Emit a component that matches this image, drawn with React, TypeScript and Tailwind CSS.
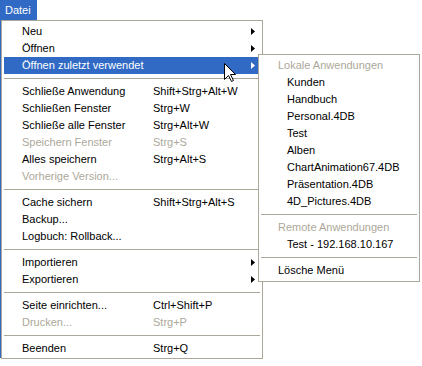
import React from 'react';

type Item =
  | { kind: 'sep' }
  | { kind: 'item'; label: string; shortcut?: string; disabled?: boolean; sub?: boolean; active?: boolean };

const mainItems: Item[] = [
  { kind: 'item', label: 'Neu', sub: true },
  { kind: 'item', label: 'Öffnen', sub: true },
  { kind: 'item', label: 'Öffnen zuletzt verwendet', sub: true, active: true },
  { kind: 'sep' },
  { kind: 'item', label: 'Schließe Anwendung', shortcut: 'Shift+Strg+Alt+W' },
  { kind: 'item', label: 'Schließen Fenster', shortcut: 'Strg+W' },
  { kind: 'item', label: 'Schließe alle Fenster', shortcut: 'Strg+Alt+W' },
  { kind: 'item', label: 'Speichern Fenster', shortcut: 'Strg+S', disabled: true },
  { kind: 'item', label: 'Alles speichern', shortcut: 'Strg+Alt+S' },
  { kind: 'item', label: 'Vorherige Version...', disabled: true },
  { kind: 'sep' },
  { kind: 'item', label: 'Cache sichern', shortcut: 'Shift+Strg+Alt+S' },
  { kind: 'item', label: 'Backup...' },
  { kind: 'item', label: 'Logbuch: Rollback...' },
  { kind: 'sep' },
  { kind: 'item', label: 'Importieren', sub: true },
  { kind: 'item', label: 'Exportieren', sub: true },
  { kind: 'sep' },
  { kind: 'item', label: 'Seite einrichten...', shortcut: 'Ctrl+Shift+P' },
  { kind: 'item', label: 'Drucken...', shortcut: 'Strg+P', disabled: true },
  { kind: 'sep' },
  { kind: 'item', label: 'Beenden', shortcut: 'Strg+Q' },
];

const recent = ['Kunden', 'Handbuch', 'Personal.4DB', 'Test', 'Alben', 'ChartAnimation67.4DB', 'Präsentation.4DB', '4D_Pictures.4DB'];

function Arrow({ white }: { white?: boolean }) {
  return (
    <svg width="4" height="7" viewBox="0 0 4 7" className="shrink-0">
      <polygon points="0,0 4,3.5 0,7" fill={white ? '#ffffff' : '#000000'} />
    </svg>
  );
}

function Separator() {
  return (
    <div className="h-[9px] flex items-center">
      <div className="h-px w-full bg-[#ACA899]" />
    </div>
  );
}

function Cursor() {
  return (
    <svg width="12" height="20" viewBox="0 0 12 20" className="absolute left-[224px] top-[63px]">
      <polygon
        points="0.5,0.5 0.5,16.5 4.5,12.5 7.5,18.5 9.5,17.5 6.5,11.5 11.5,11.5"
        fill="#ffffff"
        stroke="#000000"
        strokeWidth="1"
      />
    </svg>
  );
}

export default function App() {
  return (
    <div className="relative w-[422px] h-[366px] bg-white overflow-hidden flex flex-col text-[11px] font-['Liberation_Sans',Arial,sans-serif] leading-none">
      {/* menu bar title */}
      <div className="h-[20px] w-[37px] bg-[#316AC5] text-white flex items-center pl-[5px]">Datei</div>

      <div className="flex items-start">
        <div className="w-px h-[338px] bg-[#316AC5]" />

        {/* main menu */}
        <div className="w-[262px] border border-[#ACA899] bg-white px-[2px] pt-[2px] pb-px">
          {mainItems.map((it, i) =>
            it.kind === 'sep' ? (
              <Separator key={i} />
            ) : (
              <div
                key={i}
                className={`h-[17px] flex items-center pl-[18px] pr-[5px] ${
                  it.active ? 'bg-[#316AC5] text-white' : it.disabled ? 'text-[#ACA899]' : 'text-black'
                }`}
              >
                <span className="w-[131px] whitespace-nowrap">{it.label}</span>
                <span className="flex-1 whitespace-nowrap">{it.shortcut}</span>
                {it.sub && <Arrow white={it.active} />}
              </div>
            )
          )}
        </div>
      </div>

      {/* recent submenu, popup over the main menu */}
      <div className="absolute left-[258px] top-[54px] w-[162px] border border-[#ACA899] bg-white p-[2px] flex flex-col">
        <div className="h-[17px] flex items-center pl-[17px] text-[#ACA899]">Lokale Anwendungen</div>
        {recent.map((r) => (
          <div key={r} className="h-[17px] flex items-center pl-[26px] text-black whitespace-nowrap">
            {r}
          </div>
        ))}
        <Separator />
        <div className="h-[17px] flex items-center pl-[17px] text-[#ACA899]">Remote Anwendungen</div>
        <div className="h-[17px] flex items-center pl-[26px] text-black">Test - 192.168.10.167</div>
        <Separator />
        <div className="h-[17px] flex items-center pl-[17px] text-black">Lösche Menü</div>
      </div>

      <Cursor />
    </div>
  );
}
